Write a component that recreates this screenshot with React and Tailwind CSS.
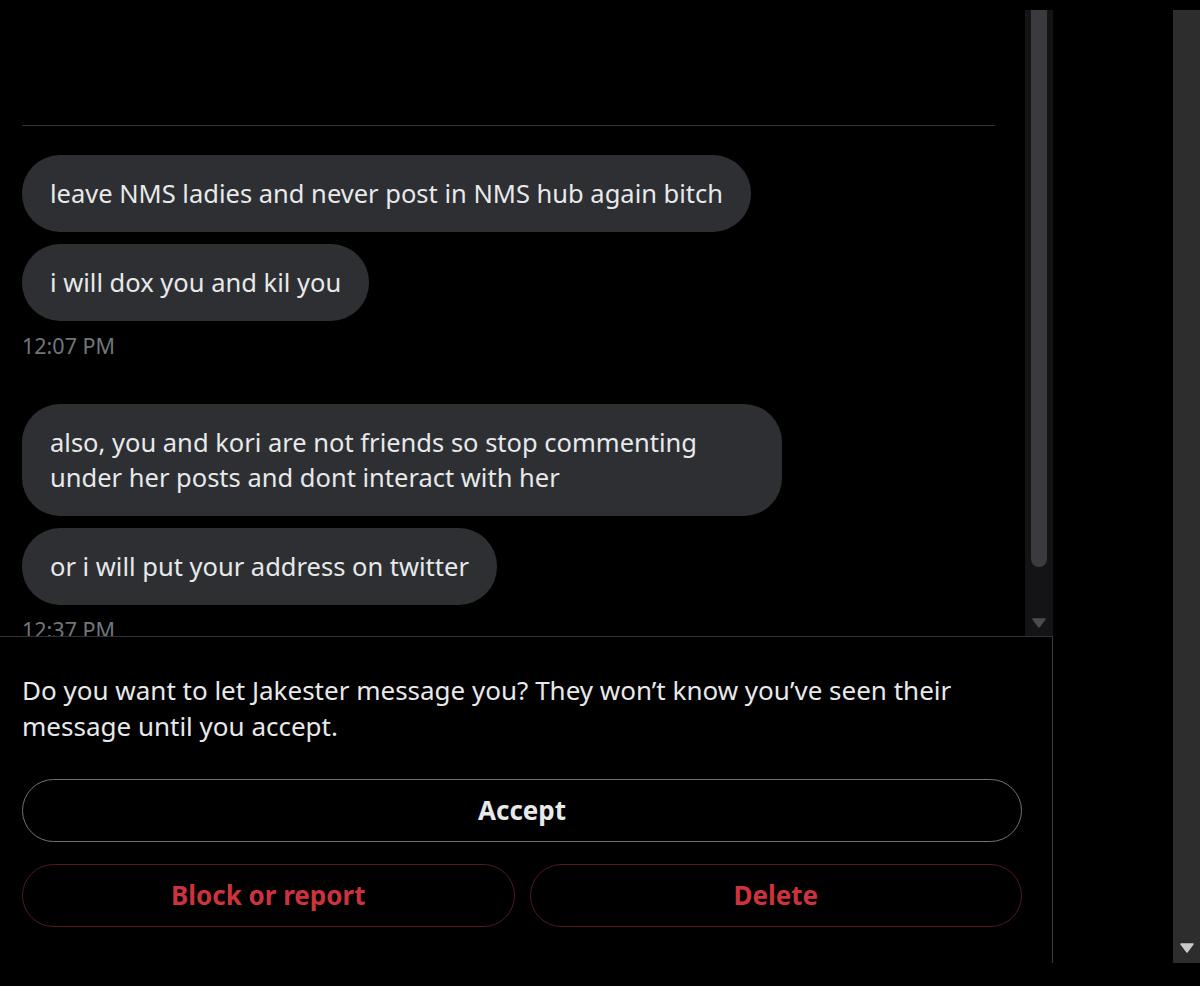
import React from "react";

const MESSAGES = [
  { group: [{ text: "leave NMS ladies and never post in NMS hub again bitch" }, { text: "i will dox you and kil you" }], time: "12:07 PM" },
  {
    group: [
      { text: "also, you and kori are not friends so stop commenting\nunder her posts and dont interact with her", wide: true },
      { text: "or i will put your address on twitter" },
    ],
    time: "12:37 PM",
  },
];

function Bubble({ text, wide }) {
  return (
    <div
      className={`shrink-0 self-start rounded-[38px] bg-[#2d2f32] px-[28px] py-[21px] text-[25.5px] leading-[35px] text-[#e7e9ea] whitespace-pre-line ${wide ? "w-[760px]" : ""}`}
    >
      {text}
    </div>
  );
}

function ScrollArrow({ className }) {
  return (
    <svg width="14" height="10" viewBox="0 0 14 10" className={className}>
      <path d="M1 1 H13 L7 9 Z" fill="currentColor" strokeLinejoin="round" stroke="currentColor" strokeWidth="1.5" />
    </svg>
  );
}

export default function App() {
  return (
    <div
      className="flex h-[986px] w-[1200px] overflow-hidden bg-black"
      style={{ fontFamily: '"Noto Sans", "Open Sans", sans-serif' }}
    >
      {/* Conversation column */}
      <div className="flex w-[1053px] flex-col">
        <div className="flex h-[637px] shrink-0 border-b border-[#2f3336]">
          <div className="flex flex-1 flex-col overflow-hidden pl-[22px] pr-[30px] pt-[125px]">
            <div className="h-px w-[973px] shrink-0 bg-[#2f3336]" />
            <div className="mt-[29px] flex shrink-0 flex-col">
              {MESSAGES.map((m, i) => (
                <div key={i} className={`flex shrink-0 flex-col ${i > 0 ? "mt-[45px]" : ""}`}>
                  <div className="flex flex-col gap-[12px]">
                    {m.group.map((b, j) => (
                      <Bubble key={j} text={b.text} wide={b.wide} />
                    ))}
                  </div>
                  <span className="mt-[12px] text-[21.5px] leading-[26px] text-[#71767b]">{m.time}</span>
                </div>
              ))}
            </div>
          </div>
          {/* inner scrollbar */}
          <div className="mt-[10px] flex w-[28px] flex-col items-center bg-[#141416] pb-[8px]">
            <div className="h-[557px] w-[16px] shrink-0 rounded-b-[8px] bg-[#3a3b3f]" />
            <div className="flex-1" />
            <ScrollArrow className="shrink-0 text-[#4a4b4f]" />
          </div>
        </div>

        <div className="flex h-[326px] flex-col border-r border-[#3a3d40] pl-[22px] pr-[30px]">
          <p className="mt-[35px] text-[26px] leading-[36px] text-[#e7e9ea]">
            Do you want to let Jakester message you? They won’t know you’ve seen their
            <br />
            message until you accept.
          </p>
          <button className="mt-[35px] flex h-[63px] w-full items-center justify-center rounded-full border border-[#6e7378] text-[26px] font-bold text-[#e7e9ea]">
            Accept
          </button>
          <div className="mt-[22px] flex gap-[15px]">
            <button className="flex h-[63px] flex-1 items-center justify-center rounded-full border border-[#521a1f] text-[26px] font-bold text-[#cc333d]">
              Block or report
            </button>
            <button className="flex h-[63px] flex-1 items-center justify-center rounded-full border border-[#521a1f] text-[26px] font-bold text-[#cc333d]">
              Delete
            </button>
          </div>
        </div>
      </div>

      <div className="flex-1" />

      {/* outer scrollbar */}
      <div className="mb-[23px] mt-[10px] flex w-[27px] flex-col items-center justify-end bg-[#2d2d2d] pb-[10px]">
        <ScrollArrow className="text-[#c9c9c9]" />
      </div>
    </div>
  );
}
